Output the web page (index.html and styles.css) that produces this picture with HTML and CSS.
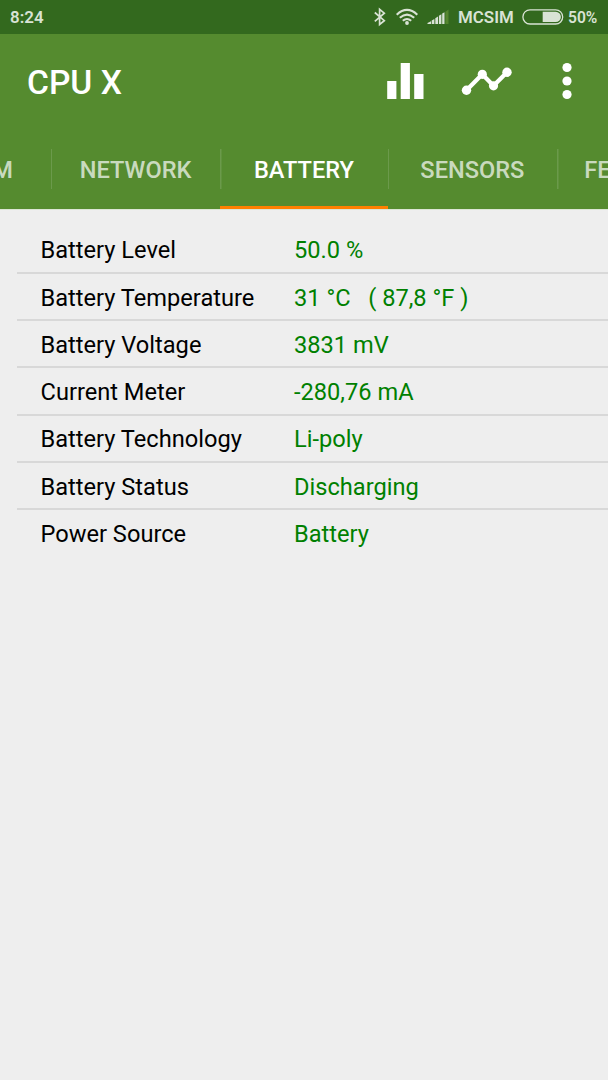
FILE: index.html
```html
<!DOCTYPE html>
<html lang="en">
<head>
<meta charset="utf-8">
<title>CPU X</title>
<link rel="stylesheet" href="styles.css">
</head>
<body>
<div class="screen">
  <header class="status">
    <span class="clock">8:24</span>
    <svg class="bluetooth" width="14" height="20" viewBox="0 0 14 20"><path d="M1.8 5.5 11.3 13.7 6.6 17.5V2.3L11.3 6.2 1.8 14.4" fill="none" stroke="currentColor" stroke-width="1.7"/></svg>
    <svg class="wifi" width="22" height="18" viewBox="0 0 22 18"><g fill="none" stroke="currentColor" stroke-width="2.1"><path d="M.7 6.7Q11-2.8 21.3 6.7"/><path d="M3.8 9.8Q11 3.3 18.2 9.8"/><path d="M6.8 12.8Q11 9.2 15.2 12.8"/></g><circle cx="11" cy="15" r="1.9" fill="currentColor"/></svg>
    <svg class="signal" width="22" height="16" viewBox="0 0 22 16"><path d="M.5 15V14L4 12.3V15ZM4.7 15V11.5L7.4 10V15ZM8.3 15V9.2L11 7.6V15ZM11.9 15V6.8L14.4 5.3V15ZM15.2 15V4.6L17.5 3.2V15Z" fill="currentColor"/><path d="M18.4 15V2.7L21.5.6V15Z" fill="#55862f"/></svg>
    <span class="carrier">MCSIM</span>
    <svg class="battery" width="42" height="16" viewBox="0 0 42 16"><rect x=".9" y=".8" width="39.8" height="14.2" rx="7.1" fill="none" stroke="currentColor" stroke-width="1.3"/><path d="M20.7 2.7H33.7A5.2 5.2 0 0 1 33.7 13.1H20.7Z" fill="currentColor"/></svg>
    <span class="percent">50%</span>
  </header>
  <div class="appbar">
    <h1 class="title">CPU X</h1>
    <svg class="bars" width="38" height="38" viewBox="0 0 38 38"><path d="M1.2 19H10.4V37H1.2ZM14.7 1H23.9V37H14.7ZM28.2 12H37.5V37H28.2Z" fill="#fff"/></svg>
    <svg class="chart" width="52" height="30" viewBox="0 0 52 30"><path d="M5.5 24.3 21.3 8.3 32.5 19.8 46 6.3" fill="none" stroke="#fff" stroke-width="4.2"/><g fill="#fff"><circle cx="5.5" cy="24.3" r="4.7"/><circle cx="21.3" cy="8.3" r="4.6"/><circle cx="32.5" cy="19.8" r="4.6"/><circle cx="46" cy="6.3" r="4.7"/></g></svg>
    <svg class="more" width="10" height="38" viewBox="0 0 10 38"><g fill="#fff"><circle cx="5" cy="5.5" r="4.6"/><circle cx="5" cy="19" r="4.6"/><circle cx="5" cy="32.5" r="4.6"/></g></svg>
  </div>
  <nav class="tabs">
    <div class="tab"><span>SYSTEM</span></div>
    <div class="tab"><span>NETWORK</span></div>
    <div class="tab active"><span>BATTERY</span></div>
    <div class="tab"><span>SENSORS</span></div>
    <div class="tab"><span>FEATURES</span></div>
  </nav>
  <main class="list">
    <div class="row"><span class="label">Battery Level</span><span class="value">50.0 %</span></div>
    <div class="row"><span class="label">Battery Temperature</span><span class="value">31 °C&nbsp;&nbsp; ( 87,8 °F )</span></div>
    <div class="row"><span class="label">Battery Voltage</span><span class="value">3831 mV</span></div>
    <div class="row"><span class="label">Current Meter</span><span class="value">-280,76 mA</span></div>
    <div class="row"><span class="label">Battery Technology</span><span class="value">Li-poly</span></div>
    <div class="row"><span class="label">Battery Status</span><span class="value">Discharging</span></div>
    <div class="row"><span class="label">Power Source</span><span class="value">Battery</span></div>
  </main>
</div>
</body>
</html>
```
FILE: styles.css
```css
* { box-sizing: border-box; }
body { margin: 0; background: #eee; font-family: Roboto, "Liberation Sans", sans-serif; }
svg { display: block; flex: none; }
.screen { width: 608px; height: 1080px; overflow: hidden; background: #eee; }
.status { display: flex; align-items: center; height: 34px; padding: 0 10px; background: #33691e; color: #d9e3d5; font-size: 16.9px; font-weight: 600; white-space: nowrap; }
.clock { width: 363px; }
.bluetooth { margin-top: -1px; }
.wifi { margin-left: 8.5px; margin-top: -1px; }
.signal { margin-left: 9.5px; margin-top: -1px; }
.carrier { margin-left: 9px; width: 56px; }
.battery { margin-left: 8px; margin-top: -1px; }
.percent { margin-left: 4px; padding-top: 1px; font-size: 15.6px; }
.appbar { display: flex; align-items: center; height: 95px; padding: 0 0 2px 27px; background: #558b2f; }
.title { width: 359px; margin: 0; padding-top: 5px; color: #fff; font-size: 33.6px; font-weight: 500; line-height: 40px; }
.chart { margin-left: 36.6px; }
.more { margin-left: 49.4px; }
.tabs { display: flex; height: 80px; margin-left: -117px; background: #558b2f; box-shadow: 0 1px 0 #dce6d5; }
.tab { display: flex; flex: none; align-items: center; justify-content: center; width: 168.4px; height: 80px; padding-top: 5px; border-bottom: 3px solid transparent; color: rgba(255,255,255,.7); font-size: 23.6px; font-weight: 500; background: linear-gradient(#6b9a4b, #6b9a4b) left 19.5px / 1.5px 40px no-repeat; }
.active { color: #fff; border-bottom-color: #ff8000; }
.list { padding: 17.4px 0 0 17px; font-size: 23.64px; line-height: 28px; }
.row { display: flex; align-items: center; height: 47.29px; padding: 2.4px 0 0 23.5px; border-bottom: 2px solid #d8d8d8; white-space: pre; }
.row:last-child { padding-top: .5px; border-bottom: 0; }
.label { width: 253.5px; color: #000; }
.value { color: #008000; }
```
